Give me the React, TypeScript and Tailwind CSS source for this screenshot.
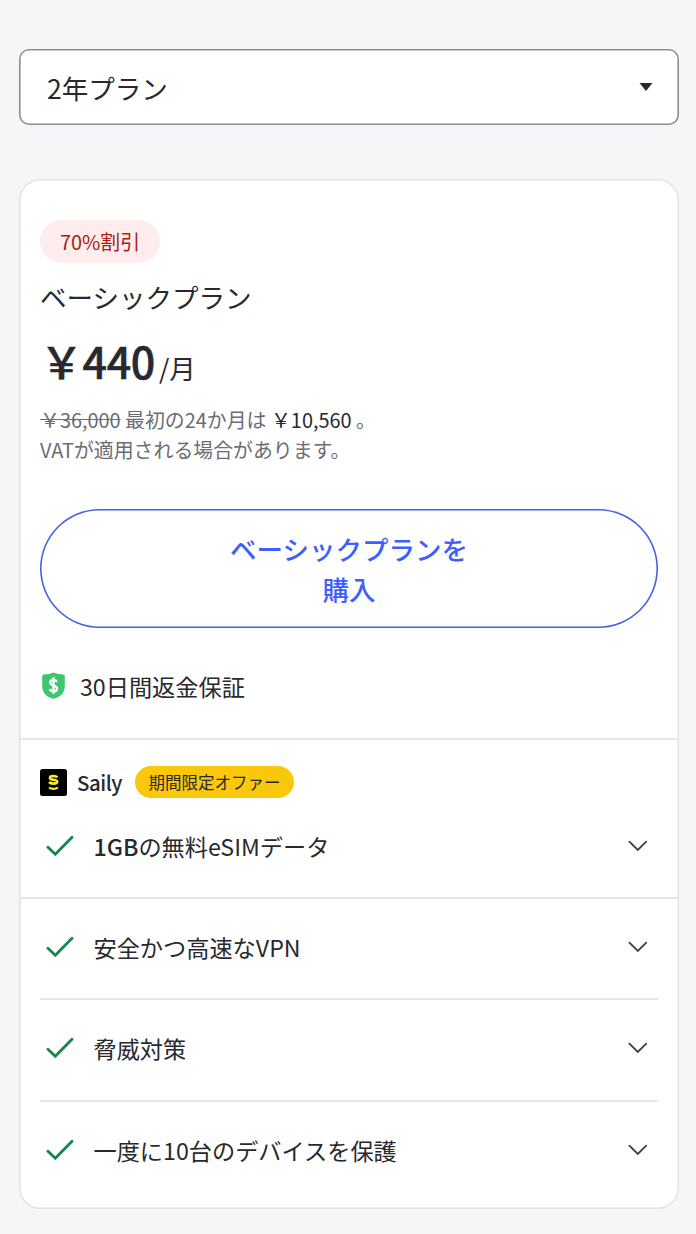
import { useState } from "react";

const features = ["安全かつ高速なVPN", "脅威対策", "一度に10台のデバイスを保護"];

function Check() {
  return (
    <svg width="28" height="22" viewBox="0 0 28 22" fill="none" className="ml-[6px] mr-[19.5px] shrink-0">
      <path d="M2 12.3 9.3 19.2 26 2.2" stroke="#1b8552" strokeWidth="2.9" strokeLinecap="round" />
    </svg>
  );
}

function Chevron() {
  return (
    <svg width="20" height="12" viewBox="0 0 20 12" fill="none" className="ml-auto mr-[10px] shrink-0">
      <path d="m1.4 1.6 8.4 8.4 8.4-8.4" stroke="#3e3f46" strokeWidth="1.8" strokeLinecap="round" />
    </svg>
  );
}

function Shield() {
  return (
    <svg width="23" height="27" viewBox="0 0 23 27" fill="none" className="-mt-[2px] ml-[2px] mr-[15px] shrink-0">
      <path
        d="M11.5.4c3 1.300 6.400 1.900 9.700 2.100 1 .1 1.600.8 1.600 1.700v10c0 6.300-4.100 10.600-11.300 12.600C4.300 24.800.2 20.500.2 14.200V4.200c0-.9.600-1.600 1.600-1.700C5.100 2.300 8.500 1.700 11.500.4Z"
        fill="#3ec56f"
      />
      <path
        d="M15 9.900c-.6-1.300-1.800-2-3.500-2-2 0-3.400 1-3.400 2.700 0 4 7 1.900 7 5.800 0 1.800-1.500 2.900-3.600 2.900-1.900 0-3.200-.8-3.800-2.300M11.500 5.200v16.600"
        stroke="#fff"
        strokeWidth="2.300"
      />
    </svg>
  );
}

function SailyLogo() {
  return (
    <svg width="27" height="27" viewBox="0 0 27 27" fill="none" className="mr-[10px] shrink-0">
      <rect width="27" height="27" rx="2.500" fill="#000" />
      <path
        d="M17.300 8.400c-.8-1-2.200-1.400-4-1.400-2.100 0-3.300.7-3.300 1.900 0 2.700 7.200 1 7.200 3.700 0 1.400-1.500 2-3.700 2-2 0-3.500-.6-4.400-1.600"
        stroke="#f8ed2d"
        strokeWidth="2.700"
      />
      <path d="M9 18.500c2.300 1.800 6.700 1.800 9 0" stroke="#f8ed2d" strokeWidth="2.100" />
    </svg>
  );
}

export default function App() {
  const [plan] = useState("2年プラン");

  return (
    <main
      lang="ja"
      className="min-h-[1234px] bg-[#f6f6f9] px-[19px] pt-[49px] pb-[25px] font-['Noto_Sans_CJK_JP',sans-serif] text-[#28292e]"
    >
      <button className="flex h-[76px] w-[660px] items-center rounded-[10px] bg-white pl-[28px] pr-[26px] text-[26.5px] shadow-[inset_0_0_0_1.6px_#8d8d93]">
        <span className="pt-[2px]">{plan}</span>
        <svg width="14" height="8" viewBox="0 0 14 8" className="ml-auto">
          <path d="M.5 0h13L7 8Z" fill="#28292e" />
        </svg>
      </button>

      <section className="mt-[54px] h-[1030px] w-[660px] rounded-[21px] bg-white shadow-[inset_0_0_0_1.6px_#e3e3e6]">
        <div className="h-[559px] px-[21px] pt-[41px]">
          <div className="flex h-[43px] w-[120px] items-center justify-center rounded-full bg-[#ffeded] text-[19.9px] text-[#ad1a16]">
            70%割引
          </div>
          <h2 className="mt-[14px] text-[26.5px] leading-[40px]">ベーシックプラン</h2>
          <div className="mt-[15px] flex h-[57px] items-baseline leading-[56px]">
            <span className="text-[43px] font-medium tracking-[-0.4px] [-webkit-text-stroke:0.5px_#28292e]">￥440</span>
            <span className="ml-[4px] text-[26.5px]">/月</span>
          </div>
          <p className="mt-[16px] text-[19.9px] leading-[30px] text-[#6c6c74]">
            <s>￥36,000</s> 最初の24か月は <span className="text-[#28292e]">￥10,560</span> 。
            <br />
            VATが適用される場合があります。
          </p>
          <button className="mt-[44px] h-[119px] w-[618px] rounded-full text-[26.5px] leading-[40px] font-medium text-[#3e5fff] shadow-[inset_0_0_0_1.6px_#4261e4]">
            ベーシックプランを
            <br />
            購入
          </button>
          <div className="mt-[41px] flex h-[34px] items-center text-[23.2px]">
            <Shield />
            <span>30日間返金保証</span>
          </div>
        </div>

        <div className="mx-px h-[159px] border-t-2 border-[#e6e6e8] px-5 pt-[26px]">
          <div className="flex h-[32px] items-center">
            <SailyLogo />
            <span className="w-[45px] text-[20.5px] font-medium tracking-[-0.5px]">Saily</span>
            <span className="ml-[13px] flex h-[32px] w-[159px] items-center justify-center rounded-full bg-[#f9c70b] text-[16.5px]">
              期間限定オファー
            </span>
          </div>
          <div className="mt-[30px] flex h-[36px] items-center text-[23.2px]">
            <Check />
            <span>
              <b className="font-medium">1GB</b>の無料eSIMデータ
            </span>
            <Chevron />
          </div>
        </div>

        <ul className="mx-px border-t-2 border-[#e6e6e8] px-5">
          {features.map((name) => (
            <li
              key={name}
              className="flex h-[101.3px] items-center border-b-2 border-[#e6e6e8] pb-[3px] text-[23.2px] last:border-b-0 last:pb-[4px]"
            >
              <Check />
              <span>{name}</span>
              <Chevron />
            </li>
          ))}
        </ul>
      </section>
    </main>
  );
}
